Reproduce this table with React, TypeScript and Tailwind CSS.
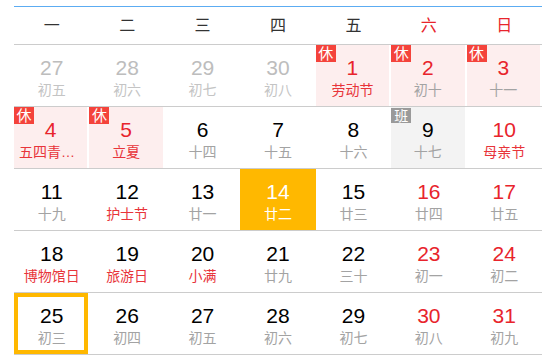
import React from 'react';

type Cell = {
  d: number;
  l: string;
  prev?: boolean;
  red?: boolean; // red day number
  fest?: boolean; // red label
  rest?: boolean;
  work?: boolean;
  today?: boolean;
  selected?: boolean;
};

const WEEK = ['一', '二', '三', '四', '五', '六', '日'];

const ROWS: Cell[][] = [
  [
    { d: 27, l: '初五', prev: true },
    { d: 28, l: '初六', prev: true },
    { d: 29, l: '初七', prev: true },
    { d: 30, l: '初八', prev: true },
    { d: 1, l: '劳动节', red: true, fest: true, rest: true },
    { d: 2, l: '初十', red: true, rest: true },
    { d: 3, l: '十一', red: true, rest: true },
  ],
  [
    { d: 4, l: '五四青年节', red: true, fest: true, rest: true },
    { d: 5, l: '立夏', red: true, fest: true, rest: true },
    { d: 6, l: '十四' },
    { d: 7, l: '十五' },
    { d: 8, l: '十六' },
    { d: 9, l: '十七', work: true },
    { d: 10, l: '母亲节', red: true, fest: true },
  ],
  [
    { d: 11, l: '十九' },
    { d: 12, l: '护士节', fest: true },
    { d: 13, l: '廿一' },
    { d: 14, l: '廿二', today: true },
    { d: 15, l: '廿三' },
    { d: 16, l: '廿四', red: true },
    { d: 17, l: '廿五', red: true },
  ],
  [
    { d: 18, l: '博物馆日', fest: true },
    { d: 19, l: '旅游日', fest: true },
    { d: 20, l: '小满', fest: true },
    { d: 21, l: '廿九' },
    { d: 22, l: '三十' },
    { d: 23, l: '初一', red: true },
    { d: 24, l: '初二', red: true },
  ],
  [
    { d: 25, l: '初三', selected: true },
    { d: 26, l: '初四' },
    { d: 27, l: '初五' },
    { d: 28, l: '初六' },
    { d: 29, l: '初七' },
    { d: 30, l: '初八', red: true },
    { d: 31, l: '初九', red: true },
  ],
];

function DayCell({ c }: { c: Cell }) {
  const numColor = c.today
    ? 'text-white'
    : c.prev
      ? 'text-[#bdbdbd]'
      : c.red
        ? 'text-[#e8242c]'
        : 'text-black';
  const labelColor = c.today
    ? 'text-white'
    : c.prev
      ? 'text-[#c4c4c4]'
      : c.fest
        ? 'text-[#e8343a]'
        : 'text-[#a3a3a3]';
  const bg = c.today
    ? 'bg-[#ffb800]'
    : c.rest
      ? 'bg-[#fdeeee] mr-[2px]'
      : c.work
        ? 'bg-[#f3f3f3] mr-[2px]'
        : '';

  return (
    <div className="relative flex h-full min-w-0">
      <div className={`flex min-w-0 flex-1 flex-col items-center pt-[11px] ${bg}`}>
        <div className={`text-[21px] leading-[24px] ${numColor}`}>{c.d}</div>
        <div
          className={`w-full truncate px-[5px] text-center text-[14px] leading-[20px] ${labelColor}`}
        >
          {c.l}
        </div>
      </div>
      {c.rest && (
        <span className="absolute top-0 left-0 flex h-[17px] w-[20px] items-center justify-center bg-[#f4433b] text-[15px] leading-none text-white">
          休
        </span>
      )}
      {c.work && (
        <span className="absolute top-[1px] left-0 flex h-[15px] w-[20px] items-center justify-center bg-[#9a9a9a] text-[14px] leading-none text-white">
          班
        </span>
      )}
      {c.selected && (
        <div className="absolute inset-y-0 left-0 right-[1px] border-4 border-[#ffb800]" />
      )}
    </div>
  );
}

export default function App() {
  return (
    <div className="h-[362px] w-[556px] bg-white pt-[6px] pl-[14px] font-['Liberation_Sans','Noto_Sans_CJK_SC',sans-serif]">
      <div className="w-[528px] border-t border-[#5cacf2]">
        {/* Week header */}
        <div className="grid h-[38px] grid-cols-7 border-b border-[#cccccc]">
          {WEEK.map((w, i) => (
            <div
              key={w}
              className={`flex items-center justify-center text-[16px] ${
                i >= 5 ? 'text-[#e8242c]' : 'text-[#333333]'
              }`}
            >
              {w}
            </div>
          ))}
        </div>

        {/* Days */}
        {ROWS.map((row, r) => (
          <div
            key={r}
            className="grid h-[62px] grid-cols-7 border-b border-[#cccccc]"
          >
            {row.map((c, i) => (
              <DayCell key={i} c={c} />
            ))}
          </div>
        ))}
      </div>
    </div>
  );
}
